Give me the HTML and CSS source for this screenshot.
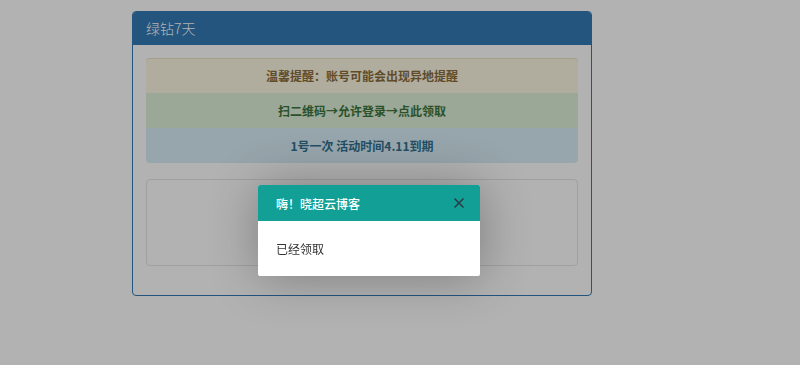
FILE: index.html
```html
<!DOCTYPE html>
<html lang="zh-CN">
<head>
    <meta charset="UTF-8">
    <meta name="viewport" content="width=device-width, initial-scale=1.0">
    <title>绿钻7天</title>
    <link rel="stylesheet" href="styles.css">
</head>
<body>
    <div class="panel">
        <div class="panel-heading">绿钻7天</div>
        <div class="panel-body">
            <ul class="list-group">
                <li class="item item-warning">温馨提醒：账号可能会出现异地提醒</li>
                <li class="item item-success">扫二维码→允许登录→点此领取</li>
                <li class="item item-info">1号一次 活动时间4.11到期</li>
            </ul>
            <div class="qr-box"></div>
        </div>
    </div>

    <!-- 遮罩 + 弹窗 -->
    <div class="shade"></div>
    <div class="layer">
        <div class="layer-title">
            <span>嗨！晓超云博客</span>
            <svg class="layer-close" width="12" height="12" viewBox="0 0 12 12">
                <path d="M1.5 1.5 L10.5 10.5 M10.5 1.5 L1.5 10.5" stroke="#2c3a44" stroke-width="1.5" fill="none"/>
            </svg>
        </div>
        <div class="layer-content">已经领取</div>
    </div>
</body>
</html>
```

FILE: styles.css
```css
body {
    margin: 0;
    font-family: "Noto Sans CJK SC", "Microsoft YaHei", sans-serif;
    background: #fff;
    color: #333;
}
.panel {
    width: 460px;
    margin: 11px 0 0 132px;
    border: 1px solid #337ab7;
    border-radius: 4px;
    box-sizing: border-box;
    background: #fff;
}
.panel-heading {
    height: 33px;
    line-height: 33px;
    padding: 0 13px;
    background: #337ab7;
    color: #fff;
    font-size: 14px;
    font-weight: 300;
    border-radius: 3px 3px 0 0;
}
.panel-body {
    padding: 13px 13px 29px;
}
.list-group {
    list-style: none;
    margin: 0;
    padding: 0;
}
.item {
    height: 35px;
    line-height: 35px;
    text-align: center;
    font-size: 12px;
    font-weight: bold;
}
.item-warning {
    background: #fcf8e3;
    color: #8a6d3b;
    border-radius: 4px 4px 0 0;
    box-shadow: inset 0 1px 0 #e8e2c4;
}
.item-success {
    background: #dff0d8;
    color: #3c763d;
}
.item-info {
    background: #d9edf7;
    color: #31708f;
    border-radius: 0 0 4px 4px;
}
.qr-box {
    margin-top: 16px;
    height: 85px;
    border: 1px solid #e6e6e6;
    border-radius: 4px;
}

/* 弹窗 */
.shade {
    position: fixed;
    inset: 0;
    background: rgba(0, 0, 0, 0.3);
}
.layer {
    position: absolute;
    left: 258px;
    top: 185px;
    width: 222px;
    background: #fff;
    border-radius: 2px;
    box-shadow: 1px 1px 50px rgba(0, 0, 0, 0.3);
}
.layer-title {
    height: 36px;
    padding: 0 15px 0 18px;
    background: #12a096;
    color: #fff;
    font-size: 12px;
    font-weight: 500;
    display: flex;
    align-items: center;
    justify-content: space-between;
    border-radius: 2px 2px 0 0;
}
.layer-close {
    display: block;
}
.layer-content {
    height: 55px;
    line-height: 55px;
    padding: 0 18px;
    font-size: 12px;
    color: #333;
}
```
